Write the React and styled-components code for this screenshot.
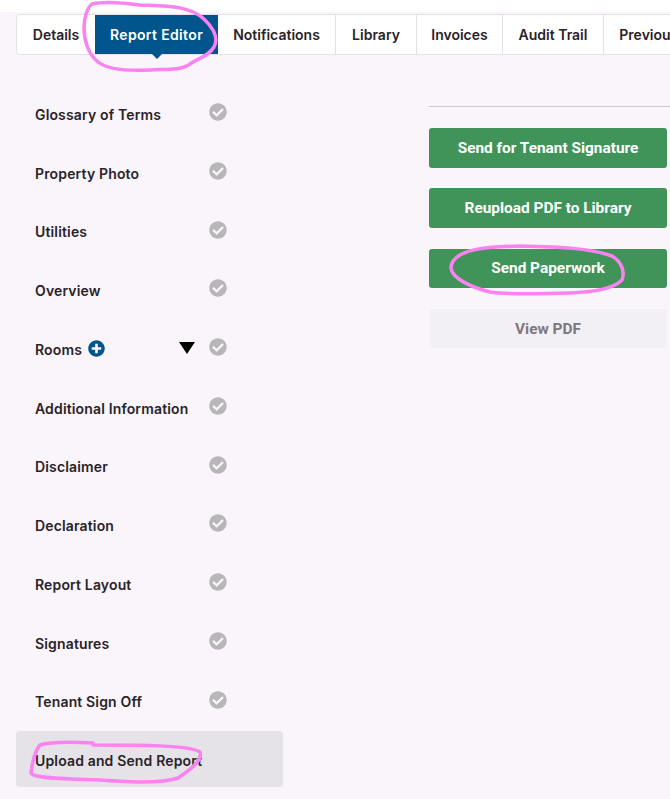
import React from "react";
import styled, { createGlobalStyle } from "styled-components";
import { FaCheckCircle, FaPlusCircle } from "react-icons/fa";

const Global = createGlobalStyle`
  html, body { margin: 0; padding: 0; background: #fff; }
  body { font-family: "Inter", "Liberation Sans", sans-serif; overflow: hidden; }
`;

const Page = styled.div`
  position: relative;
  width: 670px;
  height: 799px;
  overflow: hidden;
  background: #fff;
`;
const Canvas = styled.div`
  margin-top: 12px;
  height: 787px;
  background: #f9f5fb;
  padding: 2px 0 0 16px;
  box-sizing: border-box;
`;
const Tabs = styled.nav`
  display: flex;
  width: 760px;
  height: 41px;
  box-sizing: border-box;
  background: #fff;
  border: 1px solid #e4e1e6;
  border-radius: 4px 0 0 4px;
`;
const Tab = styled.div`
  position: relative;
  flex: none;
  width: ${(p) => p.$w}px;
  display: flex;
  align-items: center;
  justify-content: center;
  box-sizing: border-box;
  font-size: 14px;
  font-weight: 600;
  white-space: nowrap;
  letter-spacing: ${(p) => (p.$active ? "0.35px" : "0")};
  color: ${(p) => (p.$active ? "#fff" : "#2a2328")};
  background: ${(p) => (p.$active ? "#00558c" : "transparent")};
  border-right: ${(p) => (p.$divider ? "1px solid #e4e1e6" : "none")};
  ${(p) =>
    p.$active &&
    `&::after {
      content: "";
      position: absolute;
      left: 50%;
      bottom: -5px;
      margin-left: -5px;
      border-left: 5px solid transparent;
      border-right: 5px solid transparent;
      border-top: 5px solid #00558c;
    }`}
`;
const Body = styled.div`
  display: grid;
  grid-template-columns: 267px 241px;
  column-gap: 146px;
`;
const SideList = styled.ul`
  list-style: none;
  margin: 30.24px 0 0;
  padding: 0;
  display: grid;
  grid-auto-rows: 56px;
  row-gap: 2.75px;
`;
const SideItem = styled.li`
  display: flex;
  align-items: center;
  padding-left: 19px;
  border-radius: 4px;
  font-size: 14px;
  font-weight: 600;
  letter-spacing: 0.15px;
  color: #2a2328;
  background: ${(p) => (p.$current ? "#e6e3e8" : "transparent")};
`;
const ItemLabel = styled.span`
  display: flex;
  align-items: center;
  padding-top: 2.3px;
  width: 174px;
  flex: none;
  white-space: nowrap;
`;
const AddIcon = styled(FaPlusCircle)`
  color: #00558c;
  width: 17px;
  height: 17px;
  margin: -2px 0 0 6px;
`;
const Caret = styled.span`
  width: 0;
  height: 0;
  margin-left: auto;
  margin-right: 14px;
  margin-top: -2px;
  border-left: 8.5px solid transparent;
  border-right: 8.5px solid transparent;
  border-top: 12px solid #000;
`;
const DoneIcon = styled(FaCheckCircle)`
  color: #b7b6b8;
  width: 18px;
  height: 18px;
  margin-top: -2px;
`;
const Actions = styled.section`
  display: flex;
  flex-direction: column;
  margin-top: 51px;
`;
const Rule = styled.hr`
  margin: 0 0 21px;
  border: 0;
  border-top: 1px solid #cbc9cd;
`;
const ActionList = styled.div`
  display: grid;
  width: 238px;
  grid-auto-rows: 39.5px;
  row-gap: 20.8px;
`;
const ActionButton = styled.button`
  border: 0;
  border-radius: 3px;
  padding: 0;
  font-family: "Roboto", "Liberation Sans", sans-serif;
  font-size: 15.4px;
  font-weight: 700;
  color: ${(p) => (p.$muted ? "#7d787d" : "#fff")};
  background: ${(p) => (p.$muted ? "#f3f0f5" : "#409459")};
`;
const Scribbles = styled.svg`
  position: absolute;
  inset: 0;
  pointer-events: none;
  fill: none;
  stroke: #fb82f0;
  stroke-width: 3.5px;
  stroke-linecap: round;
  stroke-linejoin: round;
`;

const tabs = [
  ["Details", 78],
  ["Report Editor", 123, true],
  ["Notifications", 118, false, true],
  ["Library", 81, false, true],
  ["Invoices", 86, false, true],
  ["Audit Trail", 101, false, true],
  ["Previous Reports", 146],
];
const items = [
  "Glossary of Terms",
  "Property Photo",
  "Utilities",
  "Overview",
  "Rooms",
  "Additional Information",
  "Disclaimer",
  "Declaration",
  "Report Layout",
  "Signatures",
  "Tenant Sign Off",
  "Upload and Send Report",
];
const actions = ["Send for Tenant Signature", "Reupload PDF to Library", "Send Paperwork"];

export default function App() {
  return (
    <Page>
      <Global />
      <Canvas>
        <Tabs>
          {tabs.map(([label, w, active, divider]) => (
            <Tab key={label} $w={w} $active={active} $divider={divider}>
              {label}
            </Tab>
          ))}
        </Tabs>
        <Body>
          <SideList>
            {items.map((item, i) => {
              const current = i === items.length - 1;
              const rooms = item === "Rooms";
              return (
                <SideItem key={item} $current={current}>
                  <ItemLabel>
                    {item}
                    {rooms && <AddIcon />}
                    {rooms && <Caret />}
                  </ItemLabel>
                  {!current && <DoneIcon />}
                </SideItem>
              );
            })}
          </SideList>
          <Actions>
            <Rule />
            <ActionList>
              {actions.map((a) => (
                <ActionButton key={a}>{a}</ActionButton>
              ))}
              <ActionButton $muted>View PDF</ActionButton>
            </ActionList>
          </Actions>
        </Body>
      </Canvas>
      <Scribbles width="670" height="799" viewBox="0 0 670 799">
        <path d="M92 4 C105 1 125 3 140 5 C165 6 190 5 205 20 C214 29 219 38 214 47 C208 57 198 58 190 64 C182 70 170 69 150 70 C130 71 108 70 98 62 C88 54 84 40 84 28 C84 18 87 8 92 4 Z" />
        <path d="M93 743 C75 742 50 742 40 745 C34 752 32 765 31 773 C33 778 60 779 100 780 C130 782 160 784 178 778 C190 770 203 760 200 752 C190 745 140 745 93 745" />
        <path d="M454 260 C462 250 480 247 520 246 C560 247 590 248 612 256 C622 262 625 272 622 280 C612 290 590 292 570 293 C540 294 510 295 490 292 C470 287 452 278 451 268 C451 264 452 262 454 260 Z" />
      </Scribbles>
    </Page>
  );
}
